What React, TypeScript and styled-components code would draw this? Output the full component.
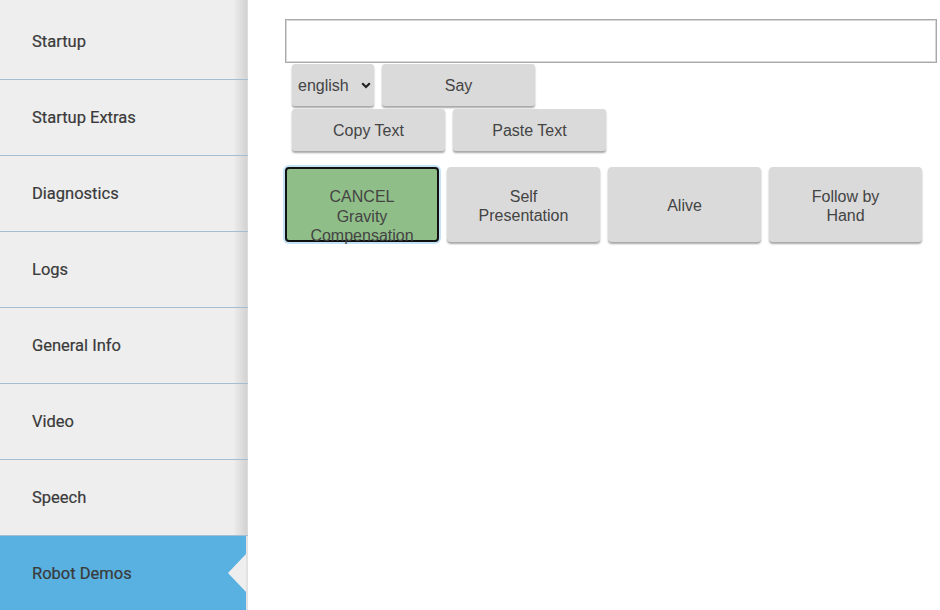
import React, { useState } from "react";
import styled, { createGlobalStyle } from "styled-components";

const GlobalStyle = createGlobalStyle`
  html, body {
    margin: 0;
    padding: 0;
    background: #ffffff;
  }
  body {
    font-family: "Liberation Sans", Arial, sans-serif;
  }
`;

const MENU = [
  "Startup",
  "Startup Extras",
  "Diagnostics",
  "Logs",
  "General Info",
  "Video",
  "Speech",
  "Robot Demos",
];

const DEMOS = [
  { id: "gravity", label: "CANCEL Gravity Compensation" },
  { id: "self", label: "Self Presentation" },
  { id: "alive", label: "Alive" },
  { id: "follow", label: "Follow by Hand" },
];

const App = (): JSX.Element => {
  const [active, setActive] = useState("Robot Demos");
  const [running, setRunning] = useState("gravity");
  const [text, setText] = useState("");

  return (
    <>
      <GlobalStyle />
      <Layout>
        <Sidebar>
          {MENU.map((item) => (
            <MenuItem key={item} active={item === active} onClick={() => setActive(item)}>
              {item}
              {item === active ? <ActiveNotch /> : null}
            </MenuItem>
          ))}
        </Sidebar>
        <Main>
          <SpeechInput value={text} onChange={(e) => setText(e.target.value)} />
          <ButtonRow>
            <SelectBox>
              <LangSelect defaultValue="english">
                <option value="english">english</option>
                <option value="french">french</option>
                <option value="german">german</option>
              </LangSelect>
              <svg width="10" height="7" viewBox="0 0 10 7">
                <path d="M1.2 1.2 L5 5 L8.8 1.2" fill="none" stroke="#222" strokeWidth="2.2" />
              </svg>
            </SelectBox>
            <GreyButton>Say</GreyButton>
          </ButtonRow>
          <ButtonRow>
            <GreyButton>Copy Text</GreyButton>
            <GreyButton>Paste Text</GreyButton>
          </ButtonRow>
          <DemoRow>
            {DEMOS.map((demo) => (
              <DemoButton
                key={demo.id}
                running={demo.id === running}
                onClick={() => setRunning(demo.id === running ? "" : demo.id)}
              >
                {demo.label}
              </DemoButton>
            ))}
          </DemoRow>
        </Main>
      </Layout>
    </>
  );
};

const Layout = styled.div`
  display: flex;
  align-items: flex-start;
  width: 940px;
  height: 610px;
  overflow: hidden;
`;

const Sidebar = styled.nav`
  display: flex;
  flex-direction: column;
  width: 248px;
  flex-shrink: 0;
  padding-top: 4px;
  background: linear-gradient(to right, #eeeeee calc(100% - 15px), #d2d2d2 calc(100% - 1px), #e6e6e6 100%);
`;

const MenuItem = styled.div<{ active: boolean }>`
  position: relative;
  box-sizing: border-box;
  display: flex;
  align-items: center;
  padding-left: 32px;
  font-family: Roboto, "Liberation Sans", sans-serif;
  font-size: 16.5px;
  font-weight: 400;
  -webkit-text-stroke: 0.2px #3a3a3a;
  color: #3a3a3a;
  cursor: pointer;
  border-bottom: ${({ active }) => (active ? "0" : "1px solid #a4bdd1")};
  height: ${({ active }) => (active ? "74px" : "76px")};
  background: ${({ active }) =>
    active
      ? "linear-gradient(to right, #58b1e0 calc(100% - 2px), #e2e2e2 calc(100% - 2px))"
      : "transparent"};
`;

const ActiveNotch = styled.span`
  position: absolute;
  right: 2px;
  top: 50%;
  transform: translateY(-50%);
  width: 0;
  height: 0;
  border-top: 19px solid transparent;
  border-bottom: 19px solid transparent;
  border-right: 18px solid #eeeeee;
`;

const Main = styled.main`
  flex: 1;
  display: flex;
  flex-direction: column;
  padding: 19px 3px 0 37px;
`;

const SpeechInput = styled.input`
  box-sizing: border-box;
  width: 652px;
  height: 44px;
  border: 1px solid #a9a9a9;
  box-shadow: inset 0 0 0 1px #d8d8d8;
  padding: 4px 8px;
  font-family: "Liberation Sans", Arial, sans-serif;
  font-size: 16px;
  outline: none;
`;

const ButtonRow = styled.div`
  display: flex;
  gap: 8px;
  padding-left: 7px;
  margin-top: 1px;

  & + & {
    margin-top: 3px;
  }
`;

const buttonBase = `
  box-sizing: border-box;
  border: none;
  border-radius: 3px;
  background: #dadada;
  box-shadow: 0 2px 2px rgba(0, 0, 0, 0.35);
  font-family: "Liberation Sans", Arial, sans-serif;
  font-size: 16px;
  color: #444;
`;

const GreyButton = styled.button`
  ${buttonBase}
  width: 153px;
  height: 42px;
  padding-top: 2px;
  cursor: pointer;
`;

const SelectBox = styled.label`
  ${buttonBase}
  width: 82px;
  height: 42px;
  display: flex;
  align-items: center;
  gap: 8px;
  padding: 1px 0 0 6px;
`;

const LangSelect = styled.select`
  appearance: none;
  -webkit-appearance: none;
  border: none;
  background: transparent;
  padding: 0;
  font-family: "Liberation Sans", Arial, sans-serif;
  font-size: 16px;
  color: #444;
  outline: none;
`;

const DemoRow = styled.div`
  display: flex;
  gap: 8px;
  margin-top: 16px;
`;

const DemoButton = styled.button<{ running: boolean }>`
  ${buttonBase}
  width: ${({ running }) => (running ? "154px" : "153px")};
  height: 75px;
  padding: 0 22px;
  line-height: 19.5px;
  cursor: pointer;
  overflow: visible;
  background: ${({ running }) => (running ? "#8fbe88" : "#dadada")};
  border: ${({ running }) => (running ? "2px solid #111" : "none")};
  border-radius: 4px;
  box-shadow: ${({ running }) =>
    running ? "0 0 0 2px #c3e2f5" : "0 2px 2px rgba(0, 0, 0, 0.35)"};
  padding-top: ${({ running }) => (running ? "18px" : "3px")};
  display: flex;
  align-items: ${({ running }) => (running ? "flex-start" : "center")};
  justify-content: center;
  text-align: center;
`;

export default App;
